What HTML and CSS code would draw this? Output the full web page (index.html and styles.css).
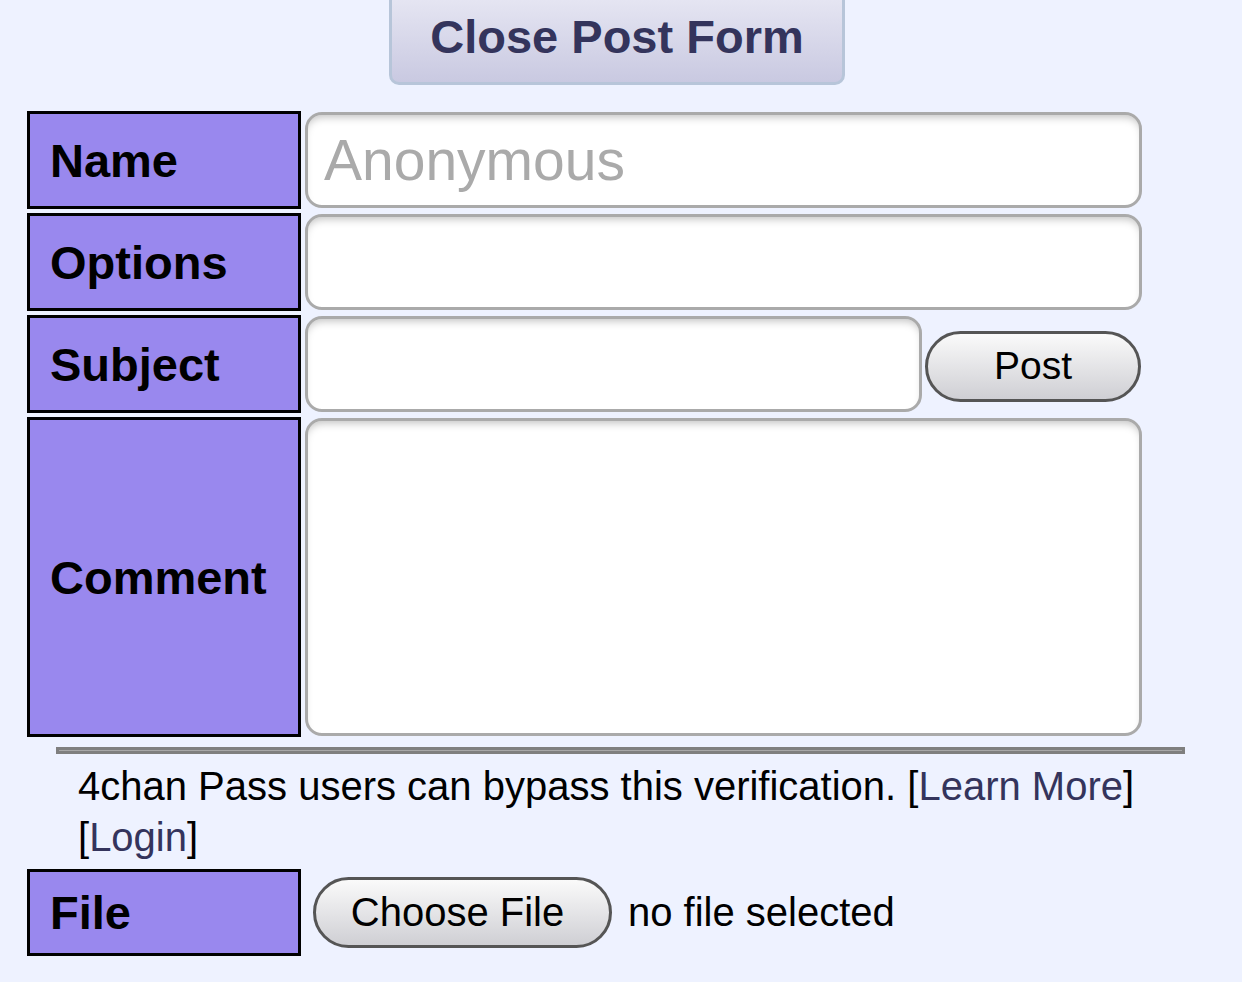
FILE: index.html
```html
<!DOCTYPE html>
<html>
<head>
<meta charset="utf-8">
<link rel="stylesheet" href="styles.css">
</head>
<body>
<div class="top">
  <button class="close-btn">Close Post Form</button>
</div>
<form class="post-form">
  <div class="row row-name">
    <div class="label">Name</div>
    <input class="field" type="text" placeholder="Anonymous">
  </div>
  <div class="row row-std">
    <div class="label">Options</div>
    <input class="field" type="text">
  </div>
  <div class="row row-std">
    <div class="label">Subject</div>
    <div class="subject-cell">
      <input class="field subject" type="text">
      <button class="post-btn" type="button">Post</button>
    </div>
  </div>
  <div class="row row-comment">
    <div class="label">Comment</div>
    <textarea class="field area"></textarea>
  </div>
</form>
<div class="captcha">
  <div class="rule"></div>
  <div class="pass">
    <div class="pass-line">4chan Pass users can bypass this verification. [<a href="#">Learn More</a>]</div>
    <div class="pass-line">[<a href="#">Login</a>]</div>
  </div>
</div>
<div class="row row-file">
  <div class="label">File</div>
  <div class="file-cell">
    <span class="choose">Choose File</span>
    <span class="nofile">no file selected</span>
  </div>
</div>
</body>
</html>
```
FILE: styles.css
```css
html, body {
  margin: 0;
  padding: 0;
  background: #eef2ff;
  font-family: "Liberation Sans", Arial, sans-serif;
  color: #000;
}
.top {
  display: flex;
  justify-content: center;
  height: 86px;
  overflow: hidden;
}
.close-btn {
  margin-top: -12px;
  margin-right: 8px;
  width: 456px;
  height: 97px;
  box-sizing: border-box;
  border: 3px solid #b7c5d9;
  border-radius: 10px;
  background: linear-gradient(#e8e8f4, #c9c9e1);
  color: #34345c;
  font-family: "Liberation Sans", Arial, sans-serif;
  font-weight: bold;
  font-size: 47px;
  padding: 0;
}
.post-form {
  margin: 25px 0 0 27px;
  display: flex;
  flex-direction: column;
  gap: 4px;
  width: 1115px;
}
.row {
  display: grid;
  grid-template-columns: 274px 1fr;
  gap: 4px;
}
.row-name, .row-std { height: 98px; }
.row-comment { height: 320px; }
.label {
  box-sizing: border-box;
  background: #9988ee;
  border: 3px solid #000;
  font-weight: bold;
  font-size: 47px;
  display: flex;
  align-items: center;
  padding-left: 20px;
}
.field {
  box-sizing: border-box;
  margin: 1px 0;
  border: 3px solid #aaa;
  border-radius: 17px;
  background: #fff;
  box-shadow: inset 0 6px 8px -4px rgba(0,0,0,0.25);
  font-family: "Liberation Sans", Arial, sans-serif;
  font-size: 57px;
  padding: 0 16px;
  outline: none;
  width: 837px;
}
.field::placeholder { color: #aaa; }
.subject-cell {
  display: flex;
  align-items: center;
  gap: 3px;
}
.subject-cell .subject {
  width: 617px;
  height: 96px;
}
.post-btn {
  width: 216px;
  height: 71px;
  margin-top: 4px;
  box-sizing: border-box;
  border: 3px solid #555;
  border-radius: 36px;
  background: linear-gradient(#fafafa, #cfcfd4);
  font-family: "Liberation Sans", Arial, sans-serif;
  font-size: 39px;
  color: #000;
  padding: 0;
}
.area {
  resize: none;
  height: 318px;
}
.captcha {
  padding: 10px 0 0 56px;
}
.rule {
  width: 1123px;
  height: 1px;
  border: 3px solid #7f7f7f;
  background: #a8a8a8;
}
.pass {
  font-size: 40px;
  line-height: 51px;
  padding: 7px 0 0 22px;
}
.pass a {
  color: #34345c;
  text-decoration: none;
}
.row-file {
  margin: 6px 0 0 27px;
  height: 87px;
  width: 1115px;
}
.file-cell {
  display: flex;
  align-items: center;
  gap: 16px;
  padding-left: 8px;
}
.choose {
  box-sizing: border-box;
  width: 299px;
  height: 71px;
  border: 3px solid #555;
  border-radius: 36px;
  background: linear-gradient(#fafafa, #cfcfd4);
  font-size: 40px;
  display: flex;
  align-items: center;
  justify-content: center;
  padding-right: 10px;
}
.nofile {
  font-size: 40px;
}
```
